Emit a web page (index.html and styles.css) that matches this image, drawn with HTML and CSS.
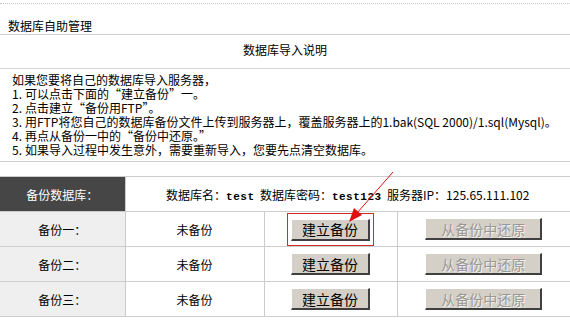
FILE: index.html
```html
<!DOCTYPE html>
<html lang="zh-CN">
<head>
<meta charset="utf-8">
<title>数据库自助管理</title>
<link rel="stylesheet" href="styles.css">
</head>
<body>
<div class="page">
  <div class="topbar"></div>
  <div class="title">数据库自助管理</div>
  <div class="subtitle">数据库导入说明</div>
  <div class="notes">
    <div class="line">如果您要将自己的数据库导入服务器，</div>
    <div class="line"><span class="num">1.</span>可以点击下面的“建立备份”一。</div>
    <div class="line"><span class="num">2.</span>点击建立“备份用FTP”。</div>
    <div class="line"><span class="num">3.</span>用FTP将您自己的数据库备份文件上传到服务器上，覆盖服务器上的1.bak(SQL 2000)/1.sql(Mysql)。</div>
    <div class="line"><span class="num">4.</span>再点从备份一中的“备份中还原。”</div>
    <div class="line"><span class="num">5.</span>如果导入过程中发生意外，需要重新导入，您要先点清空数据库。</div>
  </div>

  <table class="grid">
    <colgroup>
      <col class="c1"><col class="c2"><col class="c3"><col class="c4">
    </colgroup>
    <tr class="head">
      <td class="label-dark">备份数据库：</td>
      <td colspan="3" class="info">数据库名：<b class="mono">test</b>&nbsp;&nbsp;数据库密码：<b class="mono">test123</b>&nbsp;&nbsp;服务器IP：125.65.111.102</td>
    </tr>
    <tr>
      <td class="label">备份一：</td>
      <td>未备份</td>
      <td><span class="hl"><button class="btn btn-make">建立备份</button></span></td>
      <td><button class="btn btn-restore" disabled>从备份中还原</button></td>
    </tr>
    <tr>
      <td class="label">备份二：</td>
      <td>未备份</td>
      <td><button class="btn btn-make">建立备份</button></td>
      <td><button class="btn btn-restore" disabled>从备份中还原</button></td>
    </tr>
    <tr>
      <td class="label">备份三：</td>
      <td>未备份</td>
      <td><button class="btn btn-make">建立备份</button></td>
      <td><button class="btn btn-restore" disabled>从备份中还原</button></td>
    </tr>
  </table>

  <svg class="arrow" width="570" height="322" viewBox="0 0 570 322">
    <line x1="393" y1="172" x2="357" y2="213" stroke="#e01010" stroke-width="1"/>
    <polygon points="349,222 362,215 354,208" fill="#e01010"/>
  </svg>
</div>
</body>
</html>
```

FILE: styles.css
```css
html, body {
  margin: 0;
  padding: 0;
  background: #fff;
}

body {
  font-family: "Noto Sans CJK SC", "Liberation Sans", sans-serif;
  font-size: 12px;
  color: #000;
}

.page {
  position: relative;
  width: 570px;
  height: 322px;
  overflow: hidden;
}

.topbar {
  height: 3px;
  border-bottom: 1px dotted #c4c4c4;
}

.title {
  padding: 15px 0 0 8px;
  height: 15px;
  line-height: 14px;
  border-bottom: 1px solid #cfcfcf;
}

.subtitle {
  text-align: center;
  padding-top: 8px;
  height: 25px;
  line-height: 14px;
  border-bottom: 1px solid #d6d6d6;
}

.notes {
  padding: 4px 0 4px 12px;
  line-height: 14px;
  border-bottom: 1px solid #cfcfcf;
}

.line {
  height: 14px;
  white-space: nowrap;
}

.num {
  display: inline-block;
  width: 13px;
}

.grid {
  margin-top: 14px;
  width: 570px;
  border-collapse: collapse;
  table-layout: fixed;
}

.c1 { width: 125px; }
.c2 { width: 139px; }
.c3 { width: 133px; }
.c4 { width: 173px; }

.grid td {
  height: 34px;
  padding: 0;
  text-align: center;
  vertical-align: middle;
  border-top: 1px solid #cccccc;
  border-bottom: 1px solid #cccccc;
  border-left: 1px solid #cccccc;
}

.grid td:first-child {
  border-left: none;
}

.grid .label-dark {
  background: #464646;
  color: #fff;
}

.grid .label {
  background: #efefef;
}

.mono {
  font-family: "Liberation Mono", monospace;
  font-size: 11px;
  font-weight: bold;
  letter-spacing: 0.5px;
}

.hl {
  display: inline-block;
  padding: 5px 3px 4px 3px;
  border: 1px solid #d42a2a;
  line-height: 0;
  vertical-align: middle;
}

.btn {
  font-family: "Noto Sans CJK SC", sans-serif;
  font-size: 14px;
  font-weight: normal;
  line-height: 16px;
  height: 22px;
  padding: 0;
  background: #d4d0c8;
  color: #000;
  border-style: solid;
  border-width: 1px 2px 2px 1px;
  border-color: #ffffff #404040 #404040 #ffffff;
  vertical-align: middle;
}

.btn-make {
  width: 79px;
}

.btn-restore {
  width: 117px;
  color: #999793;
  text-shadow: 1px 1px 0 #f4f2ee;
}

.arrow {
  position: absolute;
  left: 0;
  top: 0;
  pointer-events: none;
}
```
